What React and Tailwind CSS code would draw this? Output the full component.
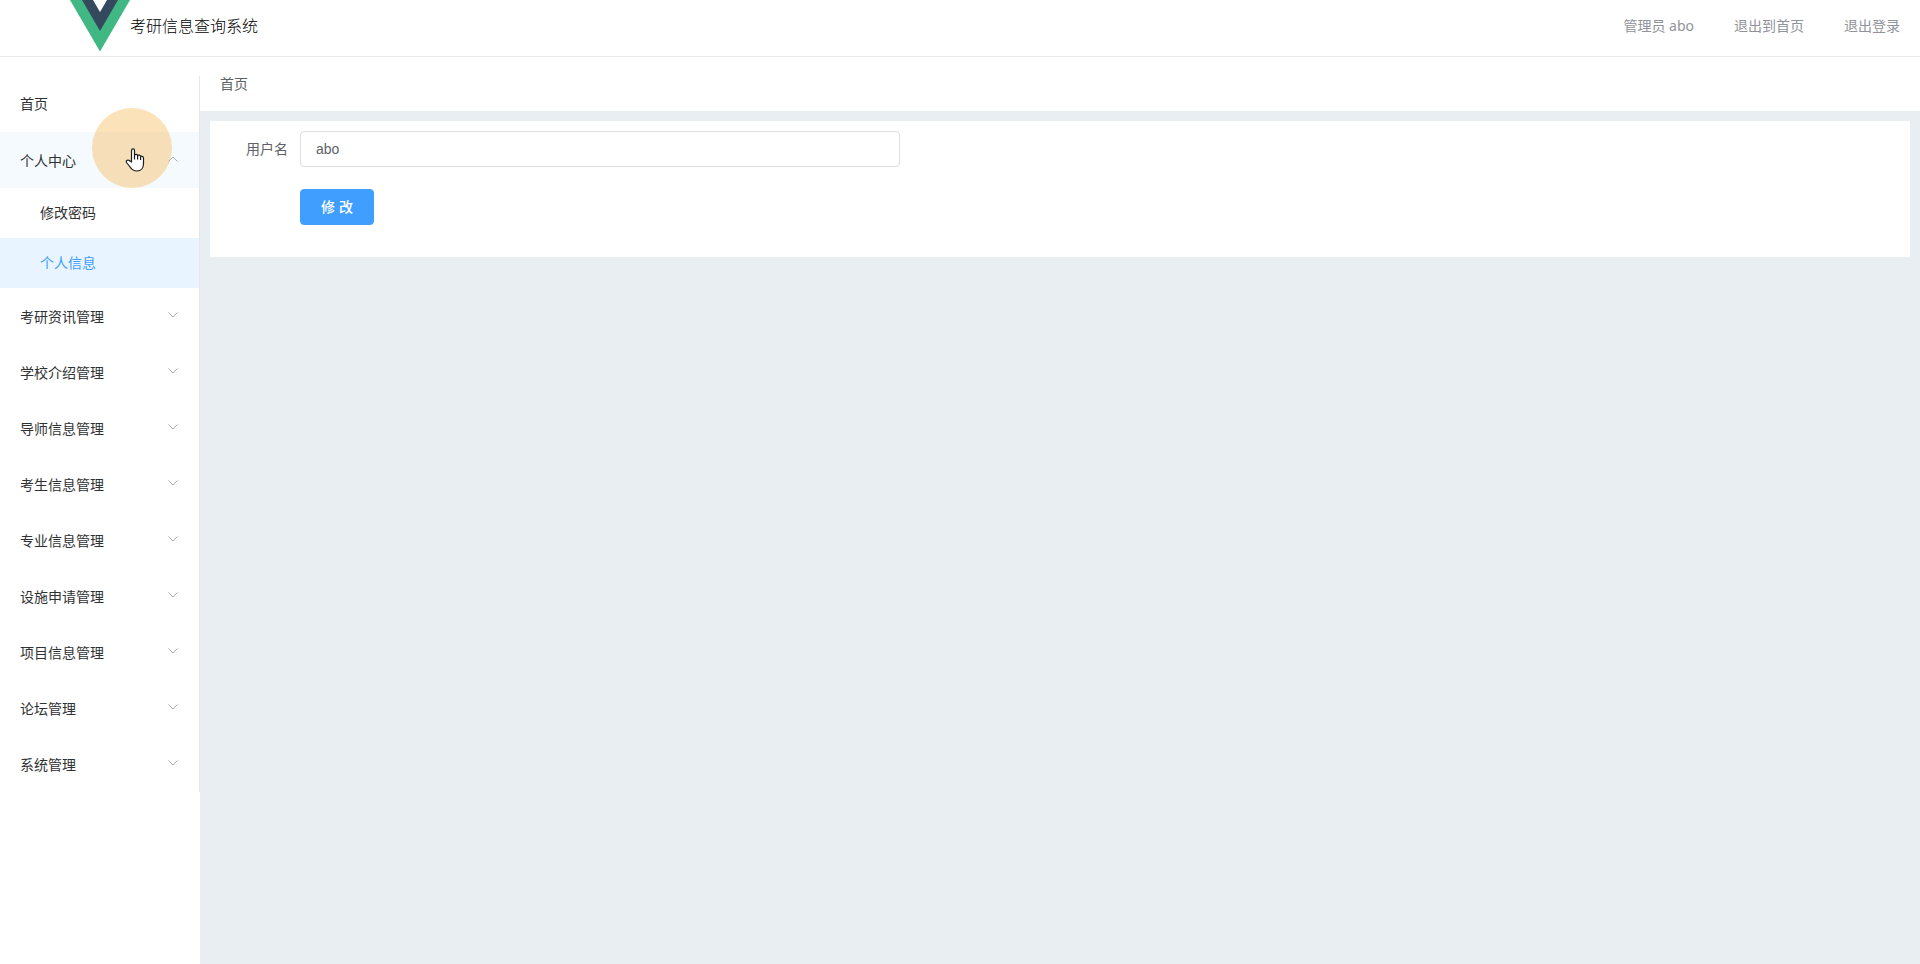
import React, { useState } from "react";

const menus = [
  { name: "首页" },
  { name: "个人中心", children: ["修改密码", "个人信息"] },
  { name: "考研资讯管理", children: [] },
  { name: "学校介绍管理", children: [] },
  { name: "导师信息管理", children: [] },
  { name: "考生信息管理", children: [] },
  { name: "专业信息管理", children: [] },
  { name: "设施申请管理", children: [] },
  { name: "项目信息管理", children: [] },
  { name: "论坛管理", children: [] },
  { name: "系统管理", children: [] },
];

const Logo = () => (
  <svg className="w-[60px] h-[52px] shrink-0" viewBox="0 0 60 52" aria-hidden="true">
    <path d="M0 0H60L30 51.500Z" fill="#41b883" />
    <path d="M12 0H48L30 31Z" fill="#35495e" />
    <path d="M23 0H37L30 12Z" fill="#fff" />
  </svg>
);

const Arrow = ({ up }) => (
  <svg
    className={`w-3 h-3 mb-1 text-[#a8abb2] ${up ? "rotate-180" : ""}`}
    viewBox="0 0 12 12"
    fill="none"
    stroke="currentColor"
    aria-hidden="true"
  >
    <path d="M1.500 3.500L6 8L10.500 3.500" />
  </svg>
);

const HandPointer = () => (
  <svg className="w-5 h-6" viewBox="0 0 20 24" aria-hidden="true">
    <path
      d="M6.500 14V2.500C6.500 .3 9.500 .3 9.500 2.500V7.200C10.300 5.900 12.300 6.200 12.600 7.600C13.500 6.600 15.300 7 15.600 8.500C16.800 7.800 18.500 8.500 18.500 10V15.500C18.500 20 16 23 12 23C8.500 23 6.500 21.500 4.700 18.500L1.500 14.500C.6 12.800 2.300 11.500 3.900 12.300Z"
      fill="#fff"
      stroke="#1a1a1a"
      strokeWidth="1.200"
      strokeLinejoin="round"
    />
    <path d="M9.500 7V11.500M12.600 7.600V11.500M15.600 8.500V12" stroke="#1a1a1a" strokeWidth="1.200" />
  </svg>
);

/* ---------- Header ---------- */
const Header = () => (
  <header className="flex h-[57px] border-b border-[#e8eaec] bg-white">
    <div className="flex items-start pl-[70px]">
      <Logo />
      <h1 className="text-base font-light leading-[52px] text-black">考研信息查询系统</h1>
    </div>
    <nav className="ml-auto flex items-start gap-10 pr-5 text-sm leading-[52px] text-[#909399]">
      <span>管理员 abo</span>
      <a href="#home">退出到首页</a>
      <a href="#logout">退出登录</a>
    </nav>
  </header>
);

/* ---------- Sidebar ---------- */
const Sidebar = () => {
  const [opened, setOpened] = useState("个人中心");
  const [active, setActive] = useState("个人信息");

  return (
    <aside className="w-[200px] shrink-0 bg-white pt-[19px]">
      <ul className="relative border-r border-[#e6e6e6] text-sm text-[#303133]">
        {menus.map((menu) => {
          const isOpen = opened === menu.name;
          return (
            <li key={menu.name}>
              <button
                type="button"
                onClick={() => setOpened(isOpen ? "" : menu.name)}
                className={`flex h-14 w-full cursor-pointer items-center justify-between px-5 hover:bg-[#f5faff] ${
                  isOpen ? "bg-[#f5faff]" : ""
                } ${menu.children ? "pt-0.5" : ""}`}
              >
                <span>{menu.name}</span>
                {menu.children && <Arrow up={isOpen} />}
              </button>
              {isOpen && menu.children?.length > 0 && (
                <ul>
                  {menu.children.map((child) => (
                    <li key={child}>
                      <button
                        type="button"
                        onClick={() => setActive(child)}
                        className={`h-[50px] w-full cursor-pointer pl-10 text-left ${
                          active === child ? "bg-[#e8f4ff] text-[#409eff]" : ""
                        }`}
                      >
                        {child}
                      </button>
                    </li>
                  ))}
                </ul>
              )}
            </li>
          );
        })}

        {/* click highlight */}
        <li className="pointer-events-none absolute left-[92px] top-8 h-20 w-20 rounded-full bg-[#f5a623]/32" aria-hidden="true" />
        <li className="pointer-events-none absolute left-[125px] top-[72px]" aria-hidden="true">
          <HandPointer />
        </li>
      </ul>
    </aside>
  );
};

/* ---------- User form ---------- */
const UserForm = () => {
  const [username, setUsername] = useState("abo");

  return (
    <form
      onSubmit={(e) => e.preventDefault()}
      className="m-[10px] bg-white px-[10px] pt-[10px] pb-8 text-sm"
    >
      <div className="mb-[22px] flex items-center">
        <label htmlFor="username" className="w-20 shrink-0 pr-3 text-right text-[#606266]">
          用户名
        </label>
        <input
          id="username"
          value={username}
          onChange={(e) => setUsername(e.target.value)}
          className="h-9 w-full max-w-[600px] rounded border border-[#dcdfe6] px-[15px] font-['Liberation_Sans','Noto_Sans_CJK_SC',sans-serif] text-[#606266] outline-none focus:border-[#409eff]"
        />
      </div>
      <button
        type="submit"
        className="ml-20 block h-9 cursor-pointer rounded border border-[#409eff] bg-[#409eff] px-5 font-['Liberation_Sans','Noto_Sans_CJK_SC',sans-serif] font-medium text-white"
      >
        修 改
      </button>
    </form>
  );
};

const App = () => {
  return (
    <div className="flex min-h-screen flex-col bg-white font-['Noto_Sans','Noto_Sans_CJK_SC',sans-serif]">
      <Header />
      <div className="flex flex-1">
        <Sidebar />
        <main className="min-w-0 flex-1 bg-[#e9eef3]">
          <div className="h-[54px] bg-white px-5 text-sm leading-[54px] text-[#606266]">首页</div>
          <UserForm />
        </main>
      </div>
    </div>
  );
};

export default App;
